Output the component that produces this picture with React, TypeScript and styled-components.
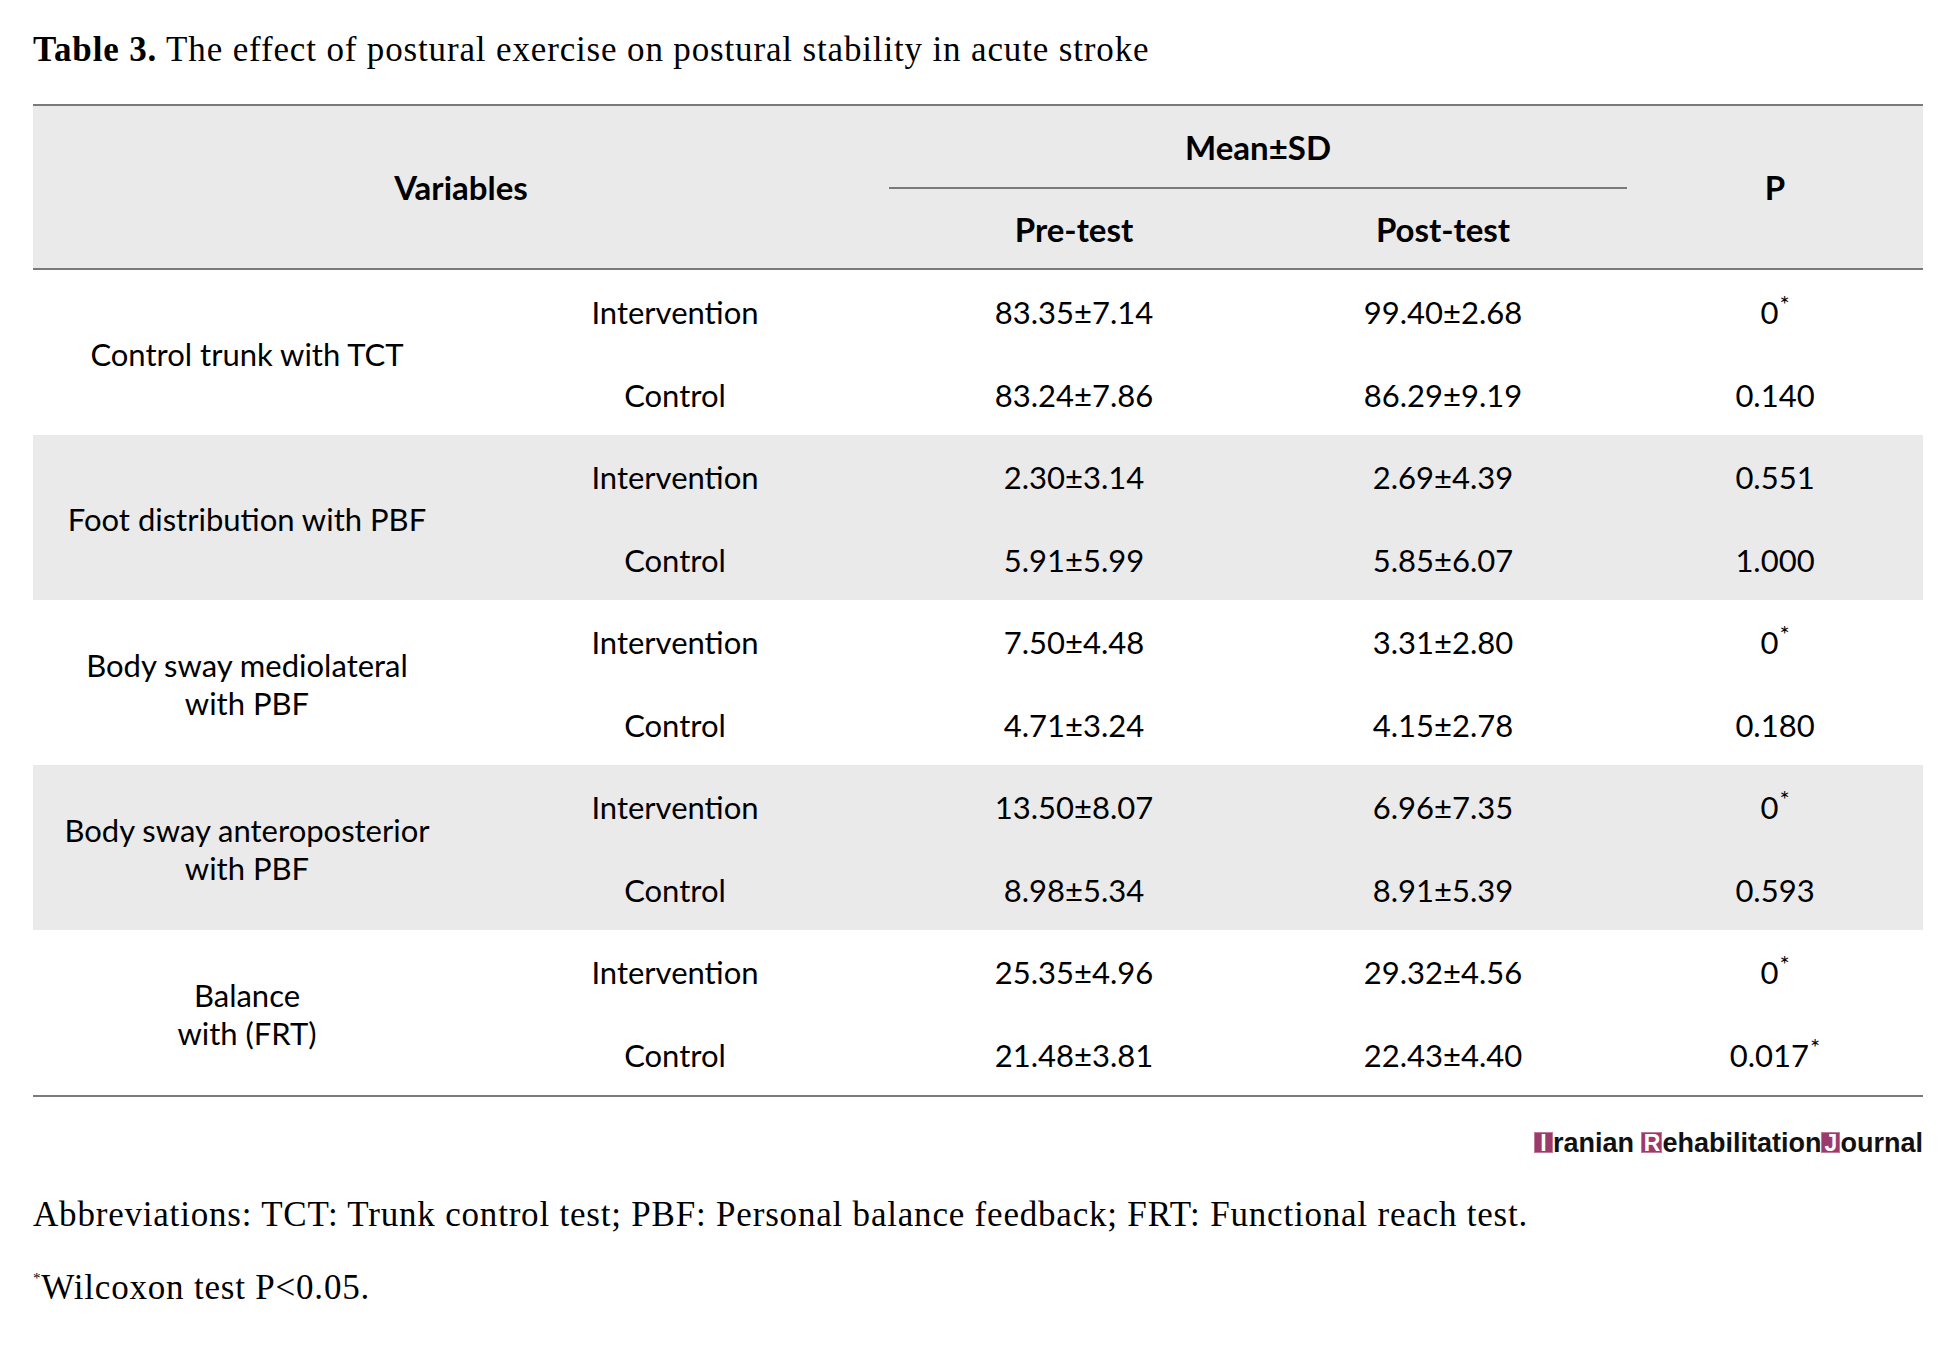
import styled, { createGlobalStyle } from 'styled-components';

const GlobalStyle = createGlobalStyle`
  body {
    margin: 0;
    background: #ffffff;
    color: #000000;
  }
`;

const Page = styled.div`
  width: 1954px;
  padding: 30px 31px 0 33px;
  box-sizing: border-box;
`;

const Title = styled.h1`
  margin: 0 0 34px;
  font-family: 'Liberation Serif', serif;
  font-size: 35px;
  line-height: 40px;
  letter-spacing: 0.85px;
  font-weight: 400;
  white-space: nowrap;

  b {
    font-weight: 700;
  }
`;

const Table = styled.table`
  width: 1890px;
  table-layout: fixed;
  border-collapse: separate;
  border-spacing: 0;
  border-top: 2px solid #7a7a7a;
  border-bottom: 2px solid #7a7a7a;
  font-family: Lato, 'Liberation Sans', sans-serif;
`;

const HeadCell = styled.th<{ $height?: number; $rule?: boolean }>`
  height: ${(p) => p.$height ?? 81}px;
  padding: 0;
  background: #eaeaea;
  font-size: 33px;
  font-weight: 700;
  text-align: center;
  vertical-align: middle;
  border-bottom: ${(p) => (p.$rule ? '2px solid #7a7a7a' : 'none')};
`;

const Row = styled.tr<{ $shaded: boolean }>`
  background: ${(p) => (p.$shaded ? '#eaeaea' : '#ffffff')};
`;

const Cell = styled.td`
  height: 82.5px;
  padding: 2px 0 0;
  box-sizing: border-box;
  font-size: 31px;
  line-height: 38px;
  text-align: center;
  vertical-align: middle;
  white-space: nowrap;
`;

const Star = styled.sup`
  font-size: 24px;
  line-height: 0;
  vertical-align: 11px;
  margin-left: 1px;
`;

const LogoRow = styled.div`
  display: flex;
  justify-content: flex-end;
  margin-top: 36px;
  height: 20px;
`;

const Logo = styled.div`
  display: flex;
  align-items: flex-end;
  font-family: 'Liberation Sans', Arial, sans-serif;
  font-size: 27px;
  font-weight: 700;
  line-height: 20px;
  color: #111111;
  white-space: pre;
`;

const Initial = styled.span<{ $w: number }>`
  display: inline-block;
  width: ${(p) => p.$w}px;
  height: 21px;
  background: #9b3a6b;
  color: #ffffff;
  font-size: 23px;
  line-height: 22px;
  text-align: center;
  box-shadow: inset 0 0 0 1px #c07a9c;
`;

const Note = styled.p<{ $gap: number }>`
  margin: ${(p) => p.$gap}px 0 0;
  font-family: 'Liberation Serif', serif;
  font-size: 35px;
  line-height: 40px;
  letter-spacing: 0.8px;
  white-space: nowrap;
`;

const NoteStar = styled.sup`
  font-size: 15px;
  line-height: 0;
  vertical-align: 16px;
`;

type DataRow = {
  group: string;
  pre: string;
  post: string;
  p: string;
  star?: boolean;
};

type Group = {
  label: string[];
  rows: DataRow[];
};

const groups: Group[] = [
  {
    label: ['Control trunk with TCT'],
    rows: [
      { group: 'Intervention', pre: '83.35±7.14', post: '99.40±2.68', p: '0', star: true },
      { group: 'Control', pre: '83.24±7.86', post: '86.29±9.19', p: '0.140' },
    ],
  },
  {
    label: ['Foot distribution with PBF'],
    rows: [
      { group: 'Intervention', pre: '2.30±3.14', post: '2.69±4.39', p: '0.551' },
      { group: 'Control', pre: '5.91±5.99', post: '5.85±6.07', p: '1.000' },
    ],
  },
  {
    label: ['Body sway mediolateral', 'with PBF'],
    rows: [
      { group: 'Intervention', pre: '7.50±4.48', post: '3.31±2.80', p: '0', star: true },
      { group: 'Control', pre: '4.71±3.24', post: '4.15±2.78', p: '0.180' },
    ],
  },
  {
    label: ['Body sway anteroposterior', 'with PBF'],
    rows: [
      { group: 'Intervention', pre: '13.50±8.07', post: '6.96±7.35', p: '0', star: true },
      { group: 'Control', pre: '8.98±5.34', post: '8.91±5.39', p: '0.593' },
    ],
  },
  {
    label: ['Balance', 'with (FRT)'],
    rows: [
      { group: 'Intervention', pre: '25.35±4.96', post: '29.32±4.56', p: '0', star: true },
      { group: 'Control', pre: '21.48±3.81', post: '22.43±4.40', p: '0.017', star: true },
    ],
  },
];

const colWidths = [428, 428, 370, 368, 296];

export default function App() {
  return (
    <>
      <GlobalStyle />
      <Page>
        <Title>
          <b>Table 3.</b> The effect of postural exercise on postural stability in acute stroke
        </Title>

        <Table>
          <colgroup>
            {colWidths.map((w, i) => (
              <col key={i} style={{ width: w }} />
            ))}
          </colgroup>
          <thead>
            <tr>
              <HeadCell rowSpan={2} colSpan={2} $rule>
                Variables
              </HeadCell>
              <HeadCell colSpan={2} $rule>
                Mean±SD
              </HeadCell>
              <HeadCell rowSpan={2} $rule>
                P
              </HeadCell>
            </tr>
            <tr>
              <HeadCell $height={79} $rule>
                Pre-test
              </HeadCell>
              <HeadCell $height={79} $rule>
                Post-test
              </HeadCell>
            </tr>
          </thead>
          <tbody>
            {groups.map((g, gi) =>
              g.rows.map((r, ri) => (
                <Row key={`${gi}-${ri}`} $shaded={gi % 2 === 1}>
                  {ri === 0 && (
                    <Cell rowSpan={2}>
                      {g.label.map((line, li) => (
                        <div key={li}>{line}</div>
                      ))}
                    </Cell>
                  )}
                  <Cell>{r.group}</Cell>
                  <Cell>{r.pre}</Cell>
                  <Cell>{r.post}</Cell>
                  <Cell>
                    {r.p}
                    {r.star && <Star>*</Star>}
                  </Cell>
                </Row>
              ))
            )}
          </tbody>
        </Table>

        <LogoRow>
          <Logo>
            <Initial $w={19}>I</Initial>
            {'ranian '}
            <Initial $w={21}>R</Initial>
            {'ehabilitation'}
            <Initial $w={19}>J</Initial>
            {'ournal'}
          </Logo>
        </LogoRow>

        <Note $gap={42}>
          Abbreviations: TCT: Trunk control test; PBF: Personal balance feedback; FRT: Functional reach test.
        </Note>
        <Note $gap={33}>
          <NoteStar>*</NoteStar>Wilcoxon test P&lt;0.05.
        </Note>
      </Page>
    </>
  );
}
